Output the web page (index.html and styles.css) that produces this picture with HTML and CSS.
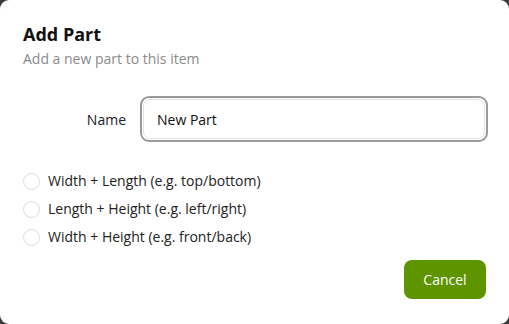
FILE: index.html
```html
<!DOCTYPE html>
<html lang="en">
<head>
<meta charset="UTF-8">
<meta name="viewport" content="width=device-width, initial-scale=1.0">
<title>Add Part</title>
<link rel="stylesheet" href="styles.css">
</head>
<body>

<div class="dialog">
    <h2 class="title">Add Part</h2>
    <p class="subtitle">Add a new part to this item</p>

    <div class="field">
        <label for="name" class="field-label">Name</label>
        <div class="input-wrap">
            <input type="text" id="name" value="New Part" class="name-input">
        </div>
    </div>

    <div class="radio-list">
        <label class="radio-row"><span class="radio"></span>Width + Length (e.g. top/bottom)</label>
        <label class="radio-row"><span class="radio"></span>Length + Height (e.g. left/right)</label>
        <label class="radio-row"><span class="radio"></span>Width + Height (e.g. front/back)</label>
    </div>

    <div class="actions">
        <button class="cancel">Cancel</button>
    </div>
</div>

</body>
</html>
```

FILE: styles.css
```css
html, body {
    margin: 0;
    padding: 0;
    height: 100%;
}

body {
    background: #3a3a3a;
    font-family: "Open Sans", sans-serif;
    color: #1a1a1a;
}

.dialog {
    box-sizing: border-box;
    height: 324px;
    background: #fff;
    border-radius: 9px;
    padding: 22px 23px 0 23px;
    display: flex;
    flex-direction: column;
}

.title {
    margin: 0;
    font-size: 18px;
    font-weight: 700;
    line-height: 24px;
    color: #111;
}

.subtitle {
    margin: 3px 0 0 0;
    font-size: 14px;
    line-height: 20px;
    color: #8a8a8a;
}

.field {
    display: flex;
    align-items: center;
    margin-top: 27px;
}

.field-label {
    width: 117px;
    text-align: right;
    padding-right: 14px;
    box-sizing: border-box;
    font-size: 14px;
    color: #222;
}

.input-wrap {
    flex: 1;
    margin-right: -2px;
    border: 2px solid #9a9a9a;
    border-radius: 9px;
    padding: 1px;
}

.name-input {
    display: block;
    width: 100%;
    box-sizing: border-box;
    height: 40px;
    border: 1px solid #e3e3e3;
    border-radius: 7px;
    padding: 0 13px;
    font-family: inherit;
    font-size: 14px;
    color: #111;
    outline: none;
}

.radio-list {
    margin-top: 29px;
    display: flex;
    flex-direction: column;
    gap: 8px;
}

.radio-row {
    display: flex;
    align-items: center;
    font-size: 14px;
    line-height: 20px;
    color: #222;
}

.radio {
    width: 15px;
    height: 15px;
    border: 1px solid #dcdcdc;
    border-radius: 50%;
    margin-right: 8px;
}

.actions {
    display: flex;
    justify-content: flex-end;
    margin-top: 13px;
}

.cancel {
    background: #5e9400;
    color: #fff;
    border: none;
    border-radius: 8px;
    width: 82px;
    height: 39px;
    font-family: inherit;
    font-size: 14px;
}
```
